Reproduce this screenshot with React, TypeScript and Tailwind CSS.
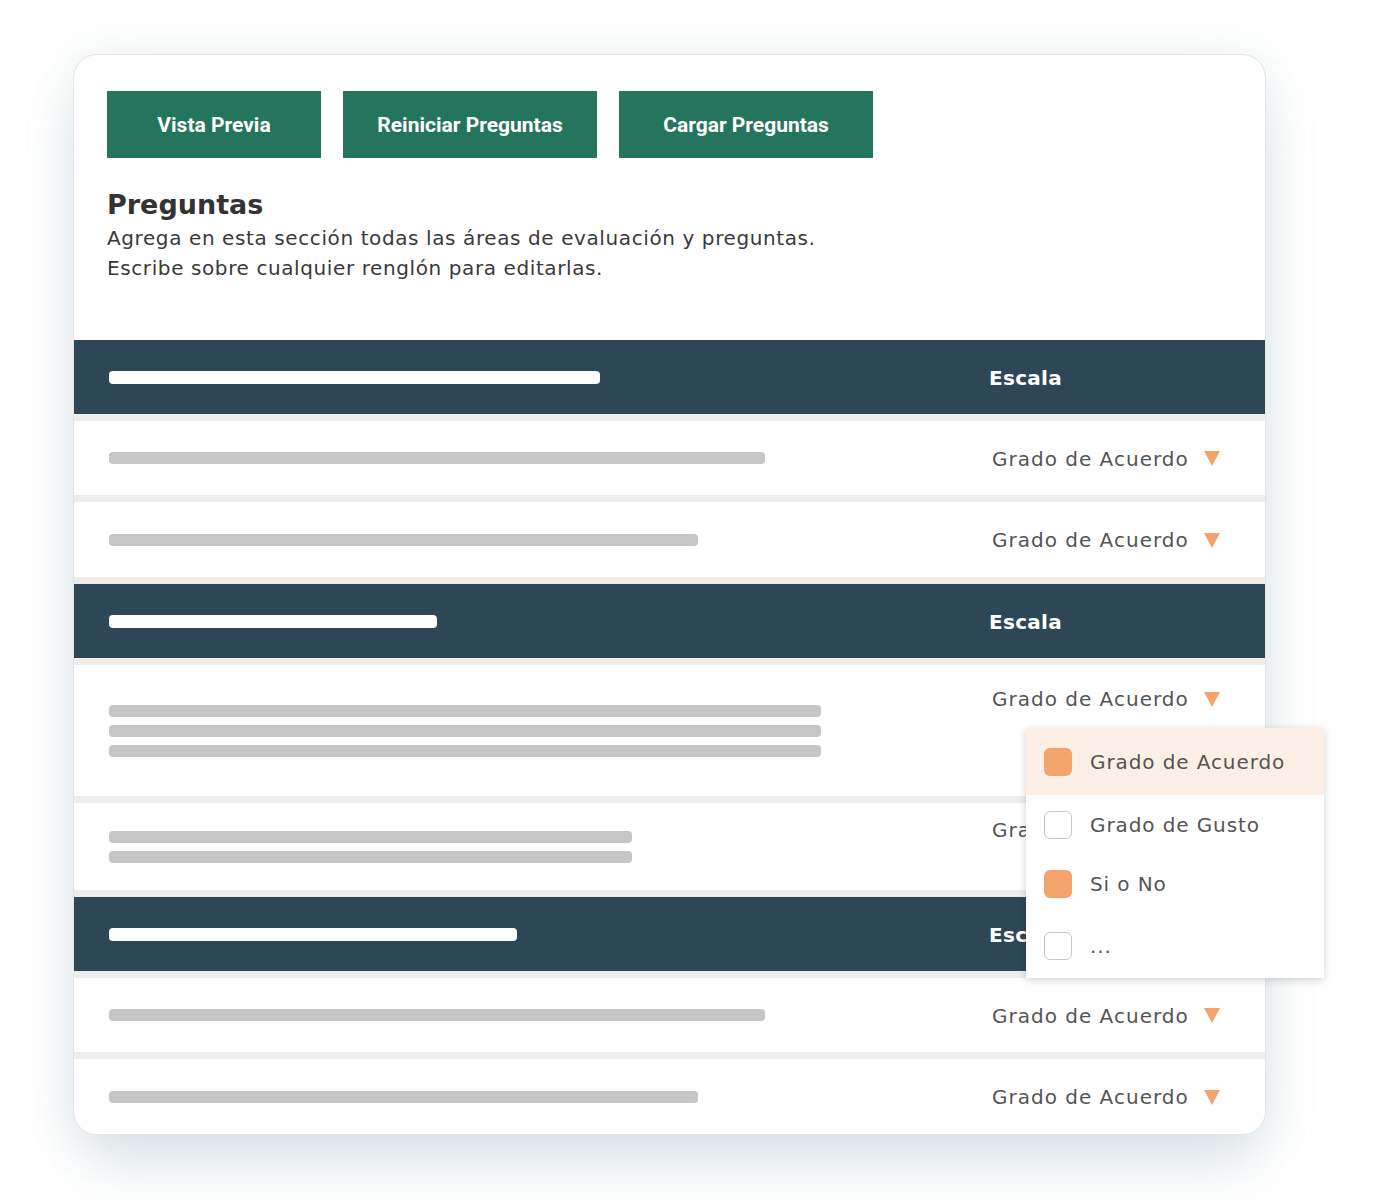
const body = { fontFamily: '"DejaVu Sans", "Open Sans", sans-serif' };
const btnFont = { fontFamily: 'Roboto, "Liberation Sans", sans-serif' };

type Row =
  | { kind: 'header'; bar: number }
  | { kind: 'item'; bars: number[]; height: number; textTop?: number };

const rows: Row[] = [
  { kind: 'header', bar: 491 },
  { kind: 'item', bars: [656], height: 74 },
  { kind: 'item', bars: [589], height: 75 },
  { kind: 'header', bar: 328 },
  { kind: 'item', bars: [712, 712, 712], height: 131, textTop: 19 },
  { kind: 'item', bars: [523, 523], height: 87, textTop: 12 },
  { kind: 'header', bar: 408 },
  { kind: 'item', bars: [656], height: 74 },
  { kind: 'item', bars: [589], height: 75 },
];

function Caret() {
  return (
    <svg width="16" height="15" viewBox="0 0 16 15" className="shrink-0">
      <path d="M0 0 H16 L8 15 Z" fill="#f2a46c" />
    </svg>
  );
}

function ScaleCell({ top }: { top?: number }) {
  return (
    <div
      className={`flex w-[228px] shrink-0 items-center gap-[15px] ${top === undefined ? 'self-center' : 'self-start'}`}
      style={top === undefined ? { marginTop: 1 } : { marginTop: top }}
    >
      <span className="whitespace-nowrap text-[20px] tracking-[1px] text-[#555555]">Grado de Acuerdo</span>
      <Caret />
    </div>
  );
}

function Check({ on }: { on: boolean }) {
  return on ? (
    <span className="block h-[28px] w-[28px] rounded-[6px] bg-[#f2a46c]" />
  ) : (
    <span className="block h-[28px] w-[28px] rounded-[6px] border border-[#c8c8c8] bg-white" />
  );
}

export default function App() {
  const options = [
    { label: 'Grado de Acuerdo', on: true, active: true, h: 67 },
    { label: 'Grado de Gusto', on: false, active: false, h: 60 },
    { label: 'Si o No', on: true, active: false, h: 58 },
    { label: '...', on: false, active: false, h: 65 },
  ];

  return (
    <div className="min-h-[1200px] w-[1400px] bg-white pt-[54px]" style={body}>
      <div className="relative ml-[73px] w-[1193px]">
        <div className="overflow-hidden rounded-[24px] border border-[#e2e4e6] bg-white shadow-[0_40px_60px_-10px_rgba(120,150,165,0.22),0_0_50px_rgba(140,170,185,0.18)]">
          <div className="px-[33px] pt-[36px]">
            <div className="flex gap-[22px]" style={btnFont}>
              <button className="h-[67px] w-[214px] bg-[#25745e] pt-[2px] text-[21px] font-bold text-white">Vista Previa</button>
              <button className="h-[67px] w-[254px] bg-[#25745e] pt-[2px] text-[21px] font-bold text-white">Reiniciar Preguntas</button>
              <button className="h-[67px] w-[254px] bg-[#25745e] pt-[2px] text-[21px] font-bold text-white">Cargar Preguntas</button>
            </div>
            <h1 className="mt-[29px] text-[27px] font-bold leading-[36px] text-[#333333]">Preguntas</h1>
            <p className="text-[20px] leading-[30px] tracking-[0.6px] text-[#3a3a3a]">
              Agrega en esta sección todas las áreas de evaluación y preguntas.
              <br />
              Escribe sobre cualquier renglón para editarlas.
            </p>
          </div>

          <div className="mt-[57px] flex flex-col gap-[7px] bg-[#eeede9]">
            {rows.map((r, i) =>
              r.kind === 'header' ? (
                <div key={i} className="flex h-[74px] items-center justify-between bg-[#2e4757] pl-[35px]">
                  <div className="h-[13px] rounded-[4px] bg-white" style={{ width: r.bar }} />
                  <span className="w-[276px] pt-[1px] text-[20px] font-bold tracking-[0.3px] text-white">Escala</span>
                </div>
              ) : (
                <div
                  key={i}
                  className="flex justify-between bg-white pl-[35px] pr-[45px]"
                  style={{ height: r.height }}
                >
                  <div className="flex flex-col gap-[8px] self-center">
                    {r.bars.map((w, j) => (
                      <div key={j} className="h-[12px] rounded-[4px] bg-[#c6c6c6]" style={{ width: w }} />
                    ))}
                  </div>
                  <ScaleCell top={r.textTop} />
                </div>
              )
            )}
          </div>
        </div>

        <div className="absolute left-[953px] top-[674px] w-[298px] bg-white shadow-[0_2px_8px_rgba(0,0,0,0.18)]">
          {options.map((o) => (
            <div
              key={o.label}
              className={`flex items-center gap-[18px] pl-[18px] ${o.active ? 'bg-[#fcf0e6]' : 'bg-white'}`}
              style={{ height: o.h }}
            >
              <Check on={o.on} />
              <span className="text-[20px] tracking-[0.9px] text-[#555555]">{o.label}</span>
            </div>
          ))}
        </div>
      </div>
    </div>
  );
}
